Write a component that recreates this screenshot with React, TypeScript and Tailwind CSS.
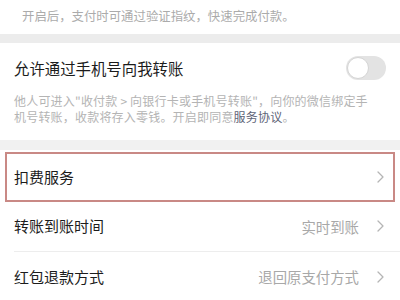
import React from 'react';

const Chevron: React.FC = () => (
  <svg width="7" height="12" viewBox="0 0 7 12" className="shrink-0">
    <polyline points="1,1 6,6 1,11" fill="none" stroke="#b5b5b5" strokeWidth="1.3" strokeLinecap="round" strokeLinejoin="round" />
  </svg>
);

export default function App() {
  return (
    <div
      className="w-[400px] h-[300px] overflow-hidden bg-white flex flex-col"
      style={{ fontFamily: '"Noto Sans CJK SC", "Noto Sans", sans-serif' }}
    >
      {/* top hint */}
      <div className="h-[34px] shrink-0 flex items-center pl-[22px] pb-[2px] text-[12.4px] text-[#ababab]">
        开启后，支付时可通过验证指纹，快速完成付款。
      </div>
      <div className="h-[9px] shrink-0 bg-[#ececec]" />

      {/* phone transfer switch */}
      <div className="shrink-0 h-[97px] px-[14px] pt-[15px]">
        <div className="flex items-center justify-between h-[20px]">
          <span className="text-[15.4px] leading-[20px] text-[#1c1c1c]">允许通过手机号向我转账</span>
          <div className="w-[40px] h-[24px] rounded-full bg-[#e3e3e3] p-[1px] flex items-center">
            <div className="w-[22px] h-[22px] rounded-full bg-white border border-[#d4d4d4]" />
          </div>
        </div>
        <p className="mt-[15px] text-[12px] leading-[16px] text-[#b4b4b4] pr-[10px] tracking-[0.2px]">
          他人可进入"收付款 &gt; 向银行卡或手机号转账"，向你的微信绑定手机号转账，收款将存入零钱。开启即同意<span className="text-[#5d6477]">服务协议</span>。
        </p>
      </div>
      <div className="h-[10px] shrink-0 bg-[#f1f1f1]" />

      {/* list */}
      <div className="pt-[2px] shrink-0">
        <div className="mx-[5px] h-[50px] border-2 border-[#c98985] flex items-center justify-between pl-[7px] pr-[9px]">
          <span className="text-[15px] text-[#1c1c1c]">扣费服务</span>
          <Chevron />
        </div>
      </div>
      <div className="h-[49px] shrink-0 flex items-center justify-between pl-[14px] pr-[16px]">
        <span className="text-[15px] text-[#1c1c1c]">转账到账时间</span>
        <div className="flex items-center gap-[18px]">
          <span className="text-[14.4px] text-[#a8a8a8]">实时到账</span>
          <Chevron />
        </div>
      </div>
      <div className="ml-[14px] h-px shrink-0 bg-[#ededed]" />
      <div className="h-[50px] shrink-0 flex items-center justify-between pl-[14px] pr-[16px]">
        <span className="text-[15px] text-[#1c1c1c]">红包退款方式</span>
        <div className="flex items-center gap-[18px]">
          <span className="text-[14.4px] text-[#a8a8a8]">退回原支付方式</span>
          <Chevron />
        </div>
      </div>
    </div>
  );
}
